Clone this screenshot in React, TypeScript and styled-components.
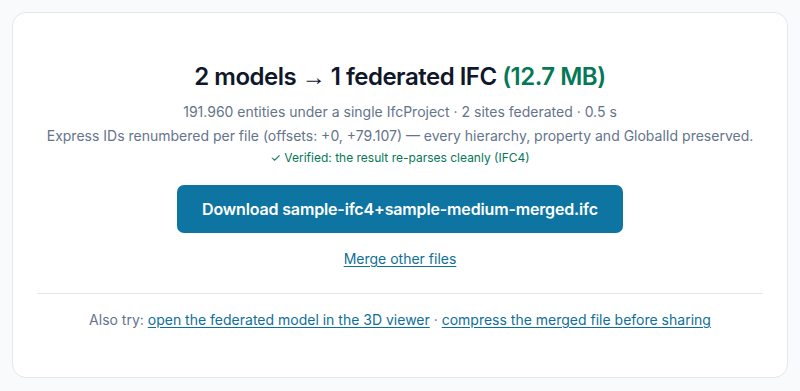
import React from 'react';
import styled, { createGlobalStyle } from 'styled-components';

const GlobalStyle = createGlobalStyle`
	html, body {
		margin: 0;
		padding: 0;
		background: #f8fafc;
		font-family: Inter, "Liberation Sans", sans-serif;
	}
`;

const Page = styled.div`
	padding: 12px;
	box-sizing: border-box;
	width: 800px;
	height: 391px;
`;

const Card = styled.div`
	background: #ffffff;
	border: 1px solid #e2e8f0;
	border-radius: 14px;
	height: 366px;
	box-sizing: border-box;
	padding: 48px 24px 0;
	display: flex;
	flex-direction: column;
	align-items: center;
	text-align: center;
`;

const Title = styled.h2`
	margin: 0;
	font-size: 24px;
	line-height: 32px;
	font-weight: 600;
	color: #0f172a;
	letter-spacing: -0.5px;
`;

const Arrow = styled.span`
	font-family: "Liberation Sans", sans-serif;
	font-weight: 400;
`;

const Size = styled.span`
	color: #047857;
`;

const Meta = styled.p`
	margin: ${props => props.$first ? '7px' : '0'} 0 0;
	font-size: 14px;
	line-height: 24px;
	color: #64748b;
`;

const Verified = styled.p`
	margin: 0;
	font-size: 12px;
	line-height: 20px;
	color: #047857;
`;

const DownloadButton = styled.button`
	margin-top: 17px;
	height: 48px;
	padding: 0 25px;
	border: none;
	border-radius: 7px;
	background: #0e75a3;
	color: #ffffff;
	font-family: inherit;
	font-size: 16px;
	font-weight: 600;
	letter-spacing: -0.15px;
	cursor: pointer;
`;

const TextLink = styled.a`
	color: #0e6f99;
	text-decoration: underline;
	text-underline-offset: 2px;
	cursor: pointer;
`;

const MergeLink = styled(TextLink)`
	margin-top: 16px;
	font-size: 14px;
	line-height: 20px;
`;

const Divider = styled.hr`
	align-self: stretch;
	border: none;
	border-top: 1px solid #e2e8f0;
	margin: 24px 0 0;
`;

const AlsoTry = styled.p`
	margin: 16px 0 0;
	font-size: 14px;
	line-height: 20px;
	color: #64748b;
`;

export default function App() {
	return (
		<Page>
			<GlobalStyle />
			<Card>
				<Title>2 models <Arrow>→</Arrow> 1 federated IFC <Size>(12.7 MB)</Size></Title>
				<Meta $first>191.960 entities under a single IfcProject · 2 sites federated · 0.5 s</Meta>
				<Meta>Express IDs renumbered per file (offsets: +0, +79.107) — every hierarchy, property and GlobalId preserved.</Meta>
				<Verified>✓ Verified: the result re-parses cleanly (IFC4)</Verified>
				<DownloadButton>Download sample-ifc4+sample-medium-merged.ifc</DownloadButton>
				<MergeLink>Merge other files</MergeLink>
				<Divider />
				<AlsoTry>
					Also try: <TextLink>open the federated model in the 3D viewer</TextLink> · <TextLink>compress the merged file before sharing</TextLink>
				</AlsoTry>
			</Card>
		</Page>
	);
}
